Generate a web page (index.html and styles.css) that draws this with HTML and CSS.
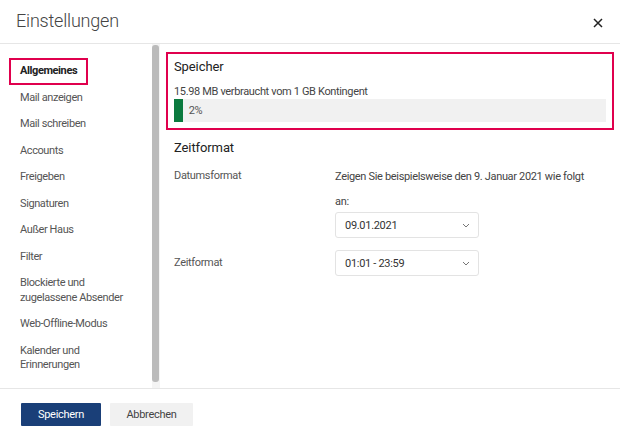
FILE: index.html
```html
<!DOCTYPE html>
<html lang="de">
<head>
<meta charset="utf-8">
<link rel="stylesheet" href="styles.css">
</head>
<body>
<div class="dialog">
  <header class="head">
    <h1 class="title">Einstellungen</h1>
    <button class="close" aria-label="Schließen">
      <svg width="10" height="10" viewBox="0 0 10 10"><path d="M1 1L9 9M9 1L1 9" stroke="#222" stroke-width="1.5" fill="none"/></svg>
    </button>
  </header>
  <div class="main">
    <nav class="nav">
      <a class="item active">Allgemeines</a>
      <a class="item">Mail anzeigen</a>
      <a class="item">Mail schreiben</a>
      <a class="item">Accounts</a>
      <a class="item">Freigeben</a>
      <a class="item">Signaturen</a>
      <a class="item">Außer Haus</a>
      <a class="item">Filter</a>
      <a class="item">Blockierte und<br>zugelassene Absender</a>
      <a class="item">Web-Offline-Modus</a>
      <a class="item">Kalender und<br>Erinnerungen</a>
    </nav>
    <div class="scroll"><div class="thumb"></div></div>
    <section class="content">
      <div class="storage">
        <h2 class="h2">Speicher</h2>
        <div class="usage">15.98 MB verbraucht vom 1 GB Kontingent</div>
        <div class="bar">
          <div class="fill" style="width:2%"></div>
          <span class="pct">2%</span>
        </div>
      </div>
      <div class="time">
        <h2 class="h2">Zeitformat</h2>
        <div class="row">
          <div class="label">Datumsformat</div>
          <div class="value">
            <p class="hint">Zeigen Sie beispielsweise den 9. Januar 2021 wie folgt an:</p>
            <div class="select"><span>09.01.2021</span><svg class="chev" width="8" height="5" viewBox="0 0 8 5"><path d="M1 1L4 4L7 1" stroke="#777" stroke-width="1" fill="none"/></svg></div>
          </div>
        </div>
        <div class="row center">
          <div class="label">Zeitformat</div>
          <div class="value">
            <div class="select"><span>01:01 - 23:59</span><svg class="chev" width="8" height="5" viewBox="0 0 8 5"><path d="M1 1L4 4L7 1" stroke="#777" stroke-width="1" fill="none"/></svg></div>
          </div>
        </div>
      </div>
    </section>
  </div>
  <footer class="foot">
    <button class="btn primary">Speichern</button>
    <button class="btn secondary">Abbrechen</button>
  </footer>
</div>
</body>
</html>
```
FILE: styles.css
```css
* { box-sizing: border-box; }
html, body { margin: 0; padding: 0; background: #fff; }
body { font-family: Roboto, "Liberation Sans", sans-serif; color: #333; }
.dialog { width: 620px; height: 439px; display: flex; flex-direction: column; }
.head { height: 44px; border-bottom: 1px solid #e6e6e6; display: flex; align-items: center; justify-content: space-between; padding: 0 16px 0 16px; }
.title { margin: 0; font-size: 18px; letter-spacing: -0.2px; font-weight: 300; color: #444; position: relative; top: -1px; }
.close { border: 0; background: transparent; padding: 0; width: 12px; height: 12px; display: flex; align-items: center; justify-content: center; position: relative; top: 1px; }
.main { height: 344px; display: flex; }
.nav { width: 152px; padding-top: 14px; display: flex; flex-direction: column; align-items: flex-start; }
.item { display: block; font-size: 11px; letter-spacing: -0.4px; line-height: 14.5px; color: #555; padding: 4px 9px; margin-left: 9px; border: 2px solid transparent; }
.item.active { font-weight: 700; color: #222; border-color: #e0004d; }
.scroll { width: 8px; padding: 1px 0 6px 0; background: #f4f4f4; }
.thumb { width: 7px; height: 100%; background: #bbb; border-radius: 3px; }
.content { flex: 1; padding: 8px 6px 0 6px; }
.storage { border: 2px solid #e0004d; padding: 4px 6px 6px 6px; }
.h2 { margin: 0; font-size: 13px; letter-spacing: -0.1px; font-weight: 400; line-height: 18px; color: #222; }
.usage { font-size: 11px; letter-spacing: -0.35px; line-height: 12px; color: #444; margin-top: 10px; }
.bar { margin-top: 1px; height: 23px; background: #f1f1f1; display: flex; align-items: center; }
.fill { height: 100%; min-width: 8px; max-width: 9px; background: #0b7a3e; }
.pct { font-size: 11px; letter-spacing: -0.3px; color: #555; margin-left: 6px; }
.time { padding: 9px 0 0 8px; }
.row { display: flex; margin-top: 7px; }
.row.center { align-items: center; margin-top: 12px; }
.label { width: 161px; font-size: 11px; letter-spacing: -0.33px; color: #555; line-height: 24px; }
.value { width: 255px; }
.hint { margin: 0 0 -2px 0; font-size: 11px; letter-spacing: -0.33px; line-height: 25px; color: #444; }
.select { width: 144px; height: 26px; border: 1px solid #e3e3e3; border-radius: 3px; display: flex; align-items: center; justify-content: space-between; padding: 0 8px 0 9px; font-size: 11px; letter-spacing: -0.3px; color: #333; }
.chev { margin-top: 1px; }
.foot { flex: 1; border-top: 1px solid #e6e6e6; display: flex; align-items: flex-start; padding: 14px 0 0 21px; gap: 9px; }
.btn { font-family: Roboto, "Liberation Sans", sans-serif; font-size: 11px; letter-spacing: -0.3px; height: 23px; border: 0; border-radius: 1px; padding: 0; }
.primary { width: 80px; background: #1a3f78; color: #fff; }
.secondary { width: 83px; background: #f1f1f1; color: #444; }
```
